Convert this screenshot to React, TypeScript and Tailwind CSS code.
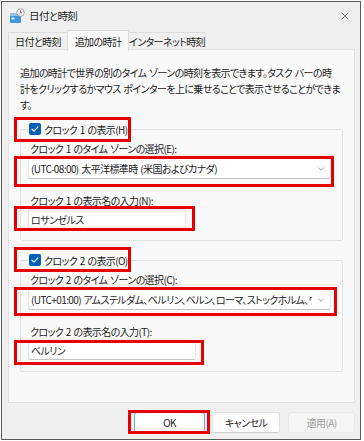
import { ChevronDown, X } from "lucide-react";

const ClockIcon = () => (
  <svg width="16" height="16" viewBox="0 0 16 16">
    <rect x="1" y="5" width="11" height="10" rx="1" fill="#3b95d6" />
    <rect x="1" y="5" width="11" height="3" fill="#8cc6ef" />
    <rect x="2.5" y="9.5" width="3" height="2" fill="#d7ecfa" />
    <circle cx="11.5" cy="4.5" r="3.8" fill="#f2f2f2" stroke="#8c8c8c" strokeWidth="0.8" />
    <path d="M11.5 2.4 V4.6 H13" fill="none" stroke="#555" strokeWidth="0.8" />
  </svg>
);

const Check = () => (
  <span className="w-[12px] h-[12px] rounded-[2px] bg-[#005fb8] flex items-center justify-center">
    <svg width="10" height="10" viewBox="0 0 10 10">
      <path d="M2 5.2 L4 7.1 L8 2.9" fill="none" stroke="white" strokeWidth="1.2" strokeLinecap="round" strokeLinejoin="round" />
    </svg>
  </span>
);

interface GroupProps {
  title: string;
  tzLabel: string;
  tz: string;
  nameLabel: string;
  name: string;
  inputW: string;
  className: string;
}

const ClockGroup = ({ title, tzLabel, tz, nameLabel, name, inputW, className }: GroupProps) => {
  return (
    <fieldset className={`border border-[#e3e3e3] rounded-[2px] pl-[7px] pr-[10px] pb-[11px] ${className}`}>
      <legend className="px-[1px] flex items-center h-[16px]">
        <Check />
        <span className="ml-[3px] whitespace-nowrap">{title}</span>
      </legend>
      <div className="leading-[14px] pt-[5px] pl-[2px] whitespace-nowrap">{tzLabel}</div>
      {/* Time zone select */}
      <div className="mt-[2px] w-[303px] h-[21px] bg-white border border-[#e5e5e5] border-b-[#c4c4c4] rounded-[3px] flex items-center pl-[2px] pr-[4px]">
        <span className="flex-1 overflow-hidden whitespace-nowrap">{tz}</span>
        <ChevronDown className="w-[10px] h-[10px] ml-[4px] shrink-0 text-[#666]" strokeWidth={1.5} />
      </div>
      <div className="leading-[14px] mt-[15px] pl-[2px] whitespace-nowrap">{nameLabel}</div>
      {/* Display name input */}
      <div className={`mt-[1px] h-[20px] bg-white border border-[#e5e5e5] border-b-[#c4c4c4] rounded-[3px] flex items-center pl-[2px] ${inputW}`}>
        {name}
      </div>
    </fieldset>
  );
};

const RedBox = ({ className }: { className: string }) => (
  <div className={`absolute border-[3px] border-[#e60000] ${className}`} />
);

export default function App() {
  return (
    <div className="relative w-[364px] h-[441px] bg-white pl-px pt-px font-['Noto_Sans_CJK_JP',sans-serif] text-[10px] tracking-[-0.6px] [word-spacing:1px] text-[#1b1b1b] [font-feature-settings:'palt']">
      <div className="w-[360px] h-[439px] border border-[#5b5b5b] bg-[#f0f0f0] flex flex-col">
        {/* Title bar */}
        <div className="h-[27px] shrink-0 flex items-center pl-[7px] pr-[9px]">
          <ClockIcon />
          <span className="ml-[4px] text-[10.5px]">日付と時刻</span>
          <X className="ml-auto w-[12px] h-[12px] text-[#333]" strokeWidth={1.2} />
        </div>
        {/* Tabs */}
        <div className="h-[21px] shrink-0 flex items-end ml-[6px]">
          <div className="h-[18px] w-[59px] border border-r-0 border-b-0 border-[#dcdcdc] flex items-center justify-center">
            日付と時刻
          </div>
          <div className="relative z-10 h-[21px] w-[62px] -mb-px border border-b-0 border-[#dcdcdc] bg-[#f9f9f9] flex items-center justify-center">
            追加の時計
          </div>
          <div className="h-[18px] w-[77px] border border-l-0 border-b-0 border-[#dcdcdc] flex items-center justify-center whitespace-nowrap">
            インターネット時刻
          </div>
        </div>
        {/* Tab panel */}
        <div className="-mt-px ml-[6px] w-[347px] h-[354px] shrink-0 border border-[#e3e3e3] bg-[#f9f9f9] px-[11px] pt-[15px]">
          <p className="leading-[16px] whitespace-nowrap">
            追加の時計で世界の別のタイム ゾーンの時刻を表示できます。タスク バーの時
            <br />
            計をクリックするかマウス ポインターを上に乗せることで表示させることができま
            <br />
            す。
          </p>
          <ClockGroup
            className="mt-[8px]"
            title="クロック 1 の表示(H)"
            tzLabel="クロック 1 のタイム ゾーンの選択(E):"
            tz="(UTC-08:00) 太平洋標準時 (米国およびカナダ)"
            nameLabel="クロック 1 の表示名の入力(N):"
            name="ロサンゼルス"
            inputW="w-[158px]"
          />
          <ClockGroup
            className="mt-[11px]"
            title="クロック 2 の表示(O)"
            tzLabel="クロック 2 のタイム ゾーンの選択(C):"
            tz="(UTC+01:00) アムステルダム、ベルリン、ベルン、ローマ、ストックホルム、ウィーン"
            nameLabel="クロック 2 の表示名の入力(T):"
            name="ベルリン"
            inputW="w-[168px]"
          />
        </div>
        {/* Buttons */}
        <div className="flex justify-end mt-[9px] pr-[5px]">
          <button className="w-[71px] h-[21px] bg-white border border-[#6aa8e6] rounded-[3px] mr-[7px]">OK</button>
          <button className="w-[68px] h-[21px] bg-white border border-[#e1e1e1] border-b-[#cfcfcf] rounded-[3px] mr-[8px]">キャンセル</button>
          <button className="w-[67px] h-[21px] bg-[#f5f5f5] border border-[#e8e8e8] rounded-[3px] text-[#a0a0a0]">適用(A)</button>
        </div>
      </div>
      <RedBox className="left-[14px] top-[117px] w-[117px] h-[25px]" />
      <RedBox className="left-[14px] top-[156px] w-[320px] h-[31px]" />
      <RedBox className="left-[14px] top-[206px] w-[181px] h-[25px]" />
      <RedBox className="left-[14px] top-[247px] w-[117px] h-[25px]" />
      <RedBox className="left-[14px] top-[287px] w-[323px] h-[29px]" />
      <RedBox className="left-[14px] top-[340px] w-[190px] h-[25px]" />
      <RedBox className="left-[128px] top-[410px] w-[82px] h-[24px]" />
    </div>
  );
}
